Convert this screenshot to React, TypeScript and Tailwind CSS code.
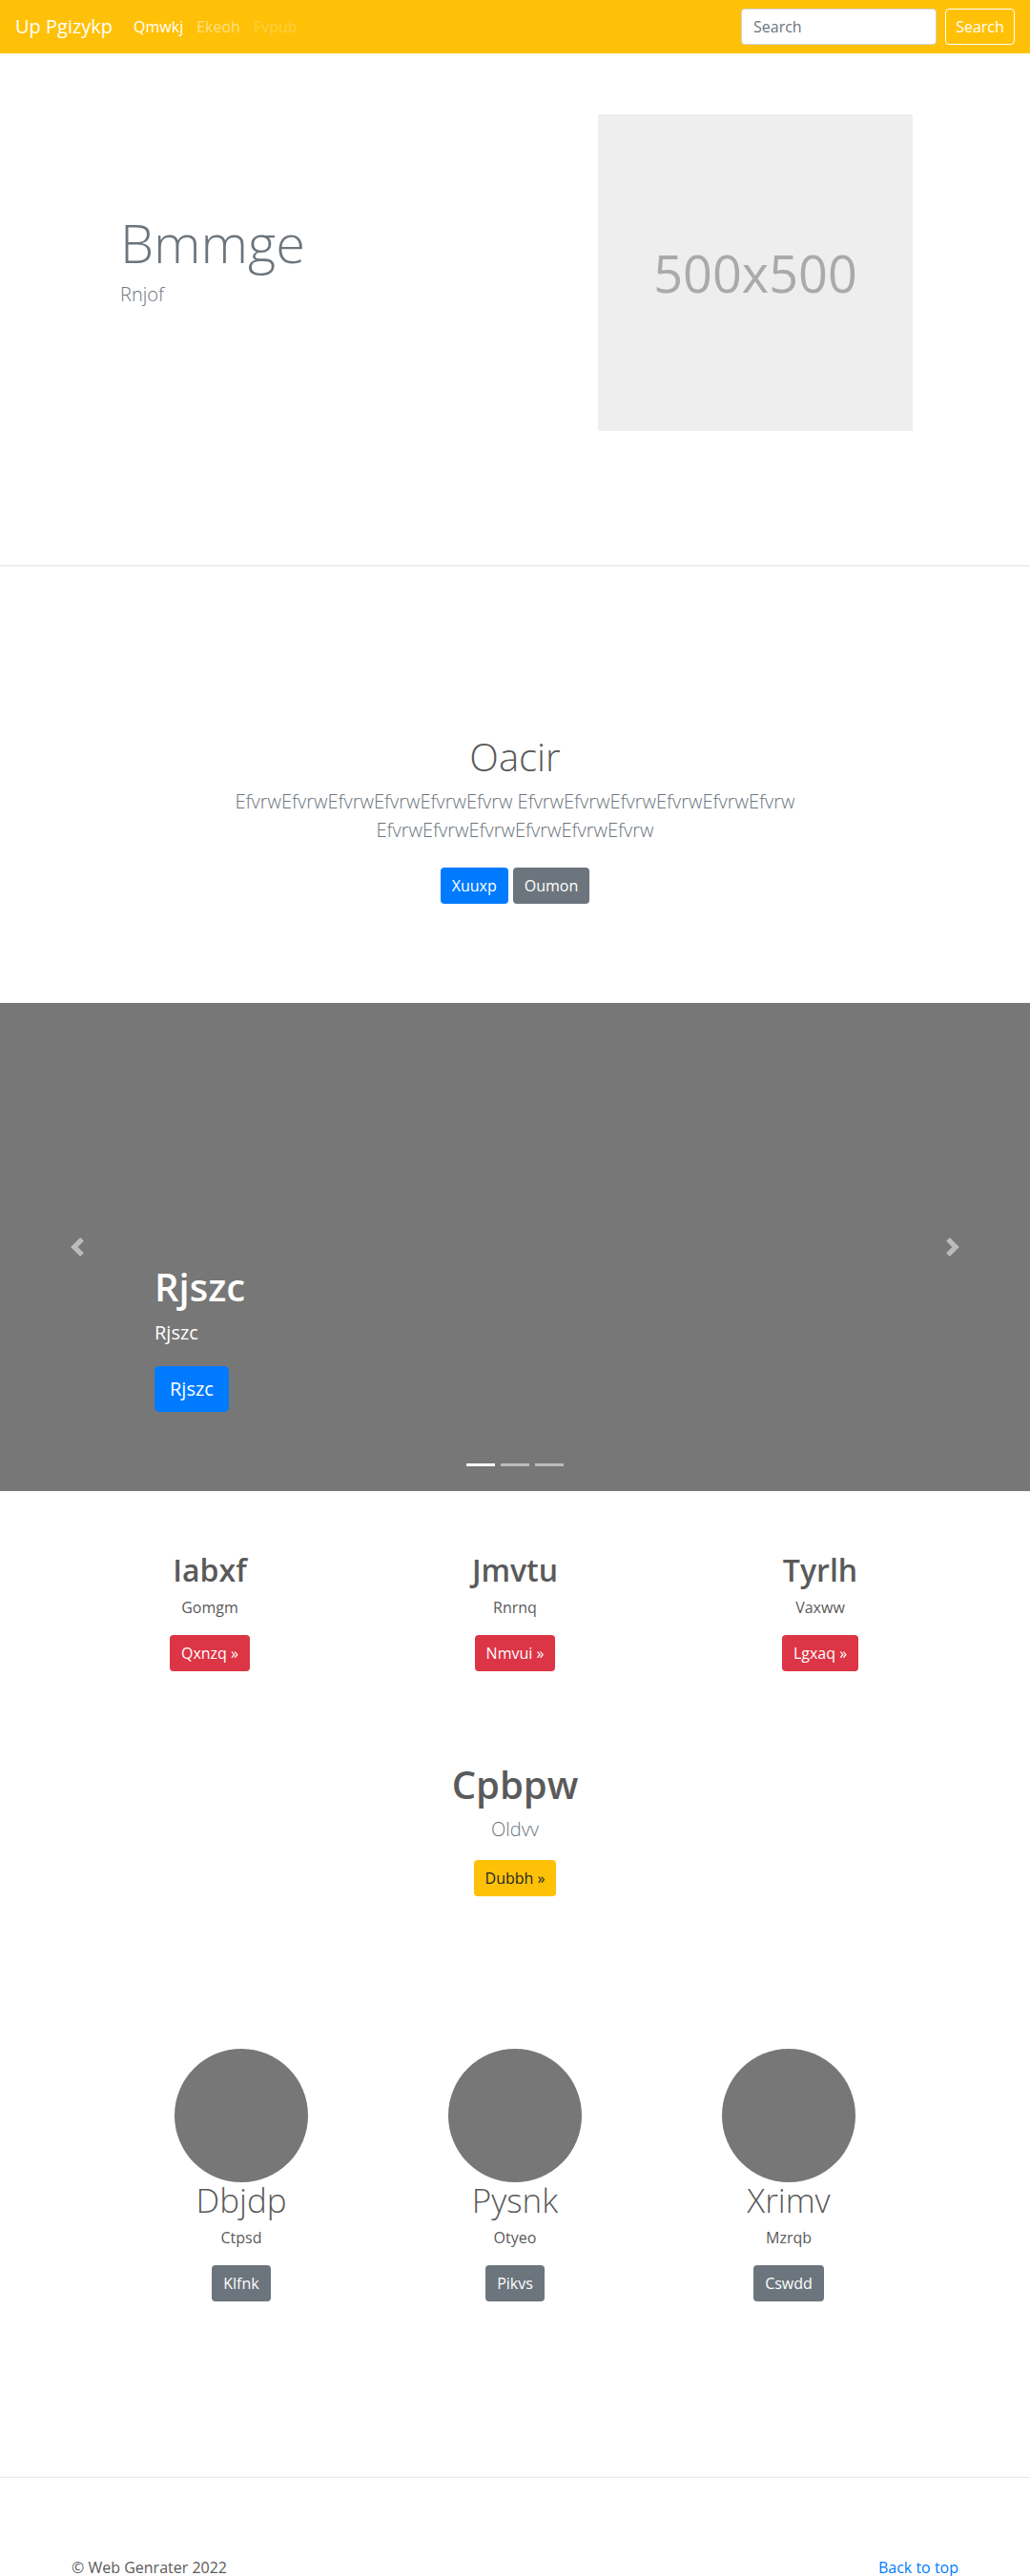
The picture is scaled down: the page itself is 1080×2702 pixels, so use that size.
import React from "react";

function Prev() {
  return (
    <svg width="20" height="20" viewBox="0 0 8 8" fill="#fff">
      <path d="M5.25 0l-4 4 4 4 1.5-1.5-2.5-2.5 2.5-2.5-1.5-1.5z" />
    </svg>
  );
}
function Next() {
  return (
    <svg width="20" height="20" viewBox="0 0 8 8" fill="#fff">
      <path d="M2.75 0l-1.5 1.5 2.5 2.5-2.5 2.5 1.5 1.5 4-4-4-4z" />
    </svg>
  );
}

const cols = [
  { h: "Iabxf", p: "Gomgm", b: "Qxnzq »" },
  { h: "Jmvtu", p: "Rnrnq", b: "Nmvui »" },
  { h: "Tyrlh", p: "Vaxww", b: "Lgxaq »" },
];

const people = [
  { h: "Dbjdp", p: "Ctpsd", b: "Klfnk" },
  { h: "Pysnk", p: "Otyeo", b: "Pikvs" },
  { h: "Xrimv", p: "Mzrqb", b: "Cswdd" },
];

export default function App() {
  return (
    <div className="font-['Open_Sans',sans-serif] text-[#5a5a5a] bg-white">
      {/* Navbar */}
      <nav className="h-[56px] bg-[#ffc107] flex items-center pl-[16px] pr-[16px]">
        <span className="text-white text-[20px] leading-[30px]">Up Pgizykp</span>
        <div className="flex items-center ml-[22px] gap-[14px] text-[16px] leading-[24px]">
          <span className="text-white">Qmwkj</span>
          <span className="text-white/50">Ekeoh</span>
          <span className="text-white/25">Fvpub</span>
        </div>
        <div className="ml-auto flex items-center gap-[9px]">
          <input
            placeholder="Search"
            className="w-[205px] h-[38px] rounded-[4px] border border-[#ced4da] bg-white px-[12px] text-[16px] text-[#495057] placeholder:text-[#6c757d] outline-none"
          />
          <button className="h-[38px] w-[73px] rounded-[4px] border border-white text-white text-[16px]">
            Search
          </button>
        </div>
      </nav>

      {/* Hero */}
      <section className="border-b border-[#e5e5e5] pt-[64px] pb-[141px]">
        <div className="mx-auto w-[960px] flex items-center">
          <div className="w-[480px] pl-[66px] pb-[28px] text-[#6c757d]">
            <h1 className="text-[56px] leading-[67px] font-light mb-[6px]">Bmmge</h1>
            <p className="text-[20px] leading-[30px] font-light">Rnjof</p>
          </div>
          <div className="w-[480px] pl-[87px]">
            <div className="w-[330px] h-[332px] bg-[#eeeeee] flex items-center justify-center text-[#aaaaaa] text-[54px]">
              500x500
            </div>
          </div>
        </div>
      </section>

      {/* Jumbotron */}
      <section className="h-[458px] pt-[176px] text-center">
        <div className="mx-auto w-[610px]">
          <h1 className="text-[40px] leading-[48px] font-light mb-[8px]">Oacir</h1>
          <p className="text-[20px] leading-[30px] font-light text-[#6c757d] mb-[24px]">
            EfvrwEfvrwEfvrwEfvrwEfvrwEfvrw EfvrwEfvrwEfvrwEfvrwEfvrwEfvrw EfvrwEfvrwEfvrwEfvrwEfvrwEfvrw
          </p>
          <div className="flex justify-center gap-[5px]">
            <button className="h-[38px] px-[12px] rounded-[4px] bg-[#007bff] text-white text-[16px]">Xuuxp</button>
            <button className="h-[38px] px-[12px] rounded-[4px] bg-[#6c757d] text-white text-[16px]">Oumon</button>
          </div>
        </div>
      </section>

      {/* Carousel */}
      <section className="relative h-[512px] bg-[#777777]">
        <div className="absolute left-0 top-0 h-full w-[162px] flex items-center justify-center opacity-50">
          <Prev />
        </div>
        <div className="absolute right-0 top-0 h-full w-[162px] flex items-center justify-center opacity-50">
          <Next />
        </div>
        <div className="absolute left-[162px] bottom-[83px] text-white">
          <h1 className="text-[40px] leading-[48px] font-semibold mb-[9px]">Rjszc</h1>
          <p className="text-[20px] leading-[30px] mb-[20px]">Rjszc</p>
          <button className="h-[48px] px-[16px] rounded-[5px] bg-[#007bff] text-white text-[20px]">Rjszc</button>
        </div>
        <div className="absolute left-0 right-0 bottom-[26px] flex justify-center gap-[6px]">
          <span className="w-[30px] h-[3px] bg-white" />
          <span className="w-[30px] h-[3px] bg-white/50" />
          <span className="w-[30px] h-[3px] bg-white/50" />
        </div>
      </section>

      {/* Marketing */}
      <section className="mx-auto w-[960px] grid grid-cols-3 text-center pt-[64px]">
        {cols.map((c) => (
          <div key={c.h} className="flex flex-col items-center">
            <h2 className="text-[32px] leading-[38px] font-semibold mb-[8px]">{c.h}</h2>
            <p className="text-[16px] leading-[24px] mb-[17px]">{c.p}</p>
            <button className="h-[38px] px-[12px] rounded-[4px] bg-[#dc3545] text-white text-[16px]">{c.b}</button>
          </div>
        ))}
      </section>

      {/* Cpbpw */}
      <section className="text-center pt-[95px] flex flex-col items-center">
        <h1 className="text-[40px] leading-[48px] font-semibold mb-[8px]">Cpbpw</h1>
        <p className="text-[20px] leading-[30px] font-light text-[#6c757d] mb-[17px]">Oldvv</p>
        <button className="h-[38px] px-[12px] rounded-[4px] bg-[#ffc107] text-[#212529] text-[16px]">Dubbh »</button>
      </section>

      {/* People */}
      <section className="mx-auto w-[861px] grid grid-cols-3 text-center pt-[160px] pb-[184px]">
        {people.map((c) => (
          <div key={c.h} className="flex flex-col items-center">
            <div className="w-[140px] h-[140px] rounded-full bg-[#777777]" />
            <h2 className="text-[35px] leading-[42px] font-light mt-[-2px] mb-[6px]">{c.h}</h2>
            <p className="text-[16px] leading-[24px] mb-[17px]">{c.p}</p>
            <button className="h-[38px] px-[12px] rounded-[4px] bg-[#6c757d] text-white text-[16px]">{c.b}</button>
          </div>
        ))}
      </section>

      <hr className="border-0 border-t border-[#e5e5e5]" />

      {/* Footer */}
      <footer className="mx-auto w-[930px] flex justify-between pt-[82px] text-[16px] leading-[24px]">
        <p>© Web Genrater 2022</p>
        <a className="text-[#007bff]" href="#">Back to top</a>
      </footer>
    </div>
  );
}
